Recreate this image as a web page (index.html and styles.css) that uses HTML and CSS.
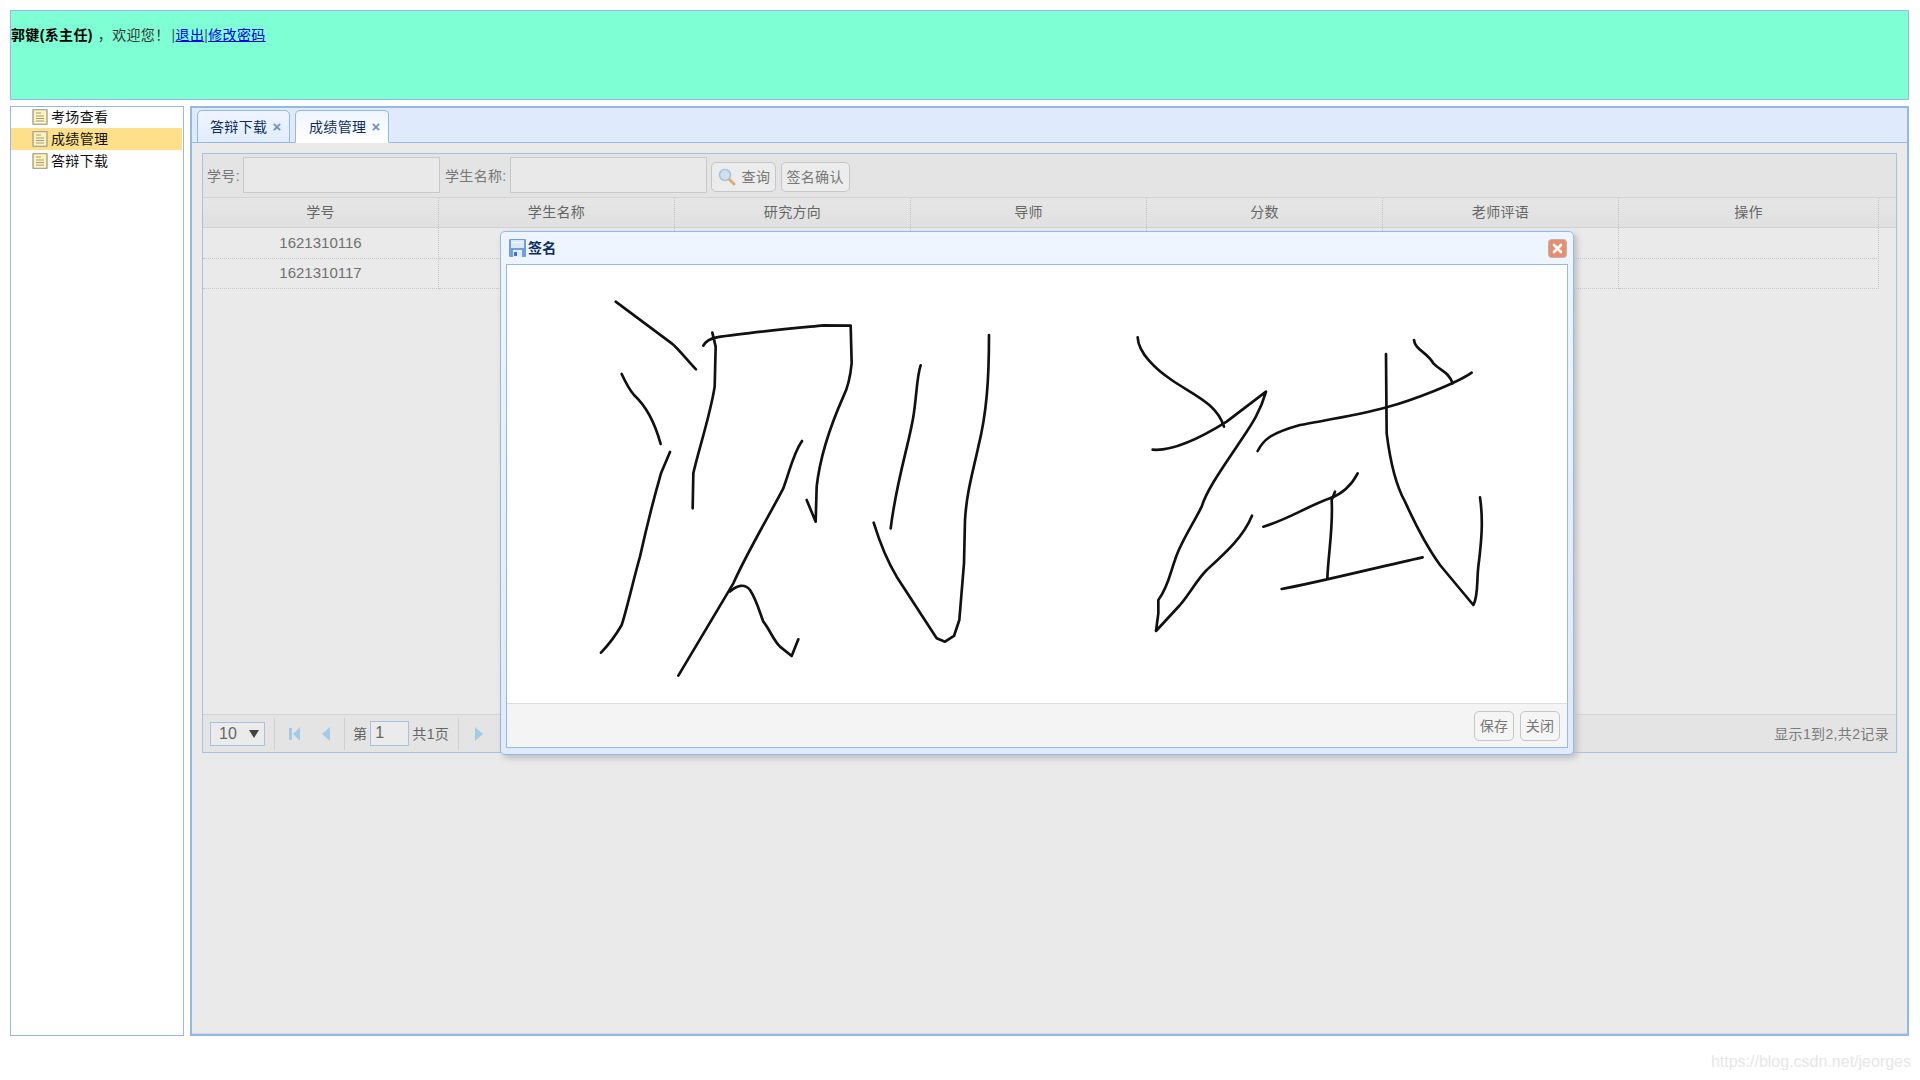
FILE: index.html
```html
<!DOCTYPE html>
<html lang="zh-CN">
<head>
<meta charset="utf-8">
<title>成绩管理</title>
<link rel="stylesheet" href="styles.css">
</head>
<body>
<header class="top">
  <b>郭键(系主任)</b><span class="greet">，欢迎您！</span><span class="pipe">|</span><a href="#">退出</a><span class="pipe">|</span><a href="#">修改密码</a>
</header>
<div class="layout">
  <nav class="tree">
    <div class="node"><svg class="file" viewBox="0 0 16 16"><rect x="1" y="0.500" width="14" height="15" rx="1" fill="#fdf3b4" stroke="#aaa69c" stroke-width="1.500"/><path d="M4 4h5M4 7h8M4 9.500h8M4 12h8" stroke="#a09c90" fill="none"/></svg>考场查看</div>
    <div class="node sel"><svg class="file" viewBox="0 0 16 16"><rect x="1" y="0.500" width="14" height="15" rx="1" fill="#fdf3b4" stroke="#aaa69c" stroke-width="1.500"/><path d="M4 4h5M4 7h8M4 9.500h8M4 12h8" stroke="#a09c90" fill="none"/></svg>成绩管理</div>
    <div class="node"><svg class="file" viewBox="0 0 16 16"><rect x="1" y="0.500" width="14" height="15" rx="1" fill="#fdf3b4" stroke="#aaa69c" stroke-width="1.500"/><path d="M4 4h5M4 7h8M4 9.500h8M4 12h8" stroke="#a09c90" fill="none"/></svg>答辩下载</div>
  </nav>
  <main class="main">
    <div class="tabs">
      <div class="tab">答辩下载<span class="x">×</span></div>
      <div class="tab on">成绩管理<span class="x">×</span></div>
    </div>
    <div class="content">
      <section class="grid">
        <div class="toolbar">
          <label class="lab">学号:</label><span class="inp"></span>
          <label class="lab">学生名称:</label><span class="inp second"></span>
          <span class="btn query"><svg class="mag" viewBox="0 0 18 18"><circle cx="7" cy="7" r="5.500" fill="#cfe0f2" stroke="#a9c0d6" stroke-width="1.500"/><path d="M11.500 11.500l4.500 4.500" stroke="#dcae74" stroke-width="3" stroke-linecap="round"/></svg>查询</span>
          <span class="btn confirm">签名确认</span>
        </div>
        <div class="row head">
          <div>学号</div><div>学生名称</div><div>研究方向</div><div>导师</div><div>分数</div><div>老师评语</div><div>操作</div><div class="tail"></div>
        </div>
        <div class="row data">
          <div class="num">1621310116</div><div></div><div></div><div></div><div></div><div></div><div></div><div class="tail"></div>
        </div>
        <div class="row data">
          <div class="num">1621310117</div><div></div><div></div><div></div><div></div><div></div><div></div><div class="tail"></div>
        </div>
        <div class="grow"></div>
        <div class="pager">
          <span class="size">10<i class="caret"></i></span>
          <span class="sep"></span>
          <svg class="pi first" viewBox="0 0 11 14"><path d="M0 1h3v12H0zM11 0v14L4 7z" fill="#a4cbe6"/></svg>
          <svg class="pi prev" viewBox="0 0 8 14"><path d="M8 0v14L0 7z" fill="#a4cbe6"/></svg>
          <span class="sep tight"></span>
          <span class="pt">第</span><span class="pg">1</span><span class="pt total">共1页</span>
          <span class="sep"></span>
          <svg class="pi next" viewBox="0 0 8 14"><path d="M0 0v14l8-7z" fill="#a4cbe6"/></svg>
          <span class="info">显示1到2,共2记录</span>
        </div>
      </section>
    </div>
  </main>
</div>
<div class="win">
  <div class="win-title">
    <svg class="save" viewBox="0 0 17 18"><rect width="17" height="18" rx="1" fill="#6f9fe2"/><rect x="2" y="1" width="13" height="8" fill="#dbe8f8"/><rect x="2" y="3" width="13" height="1" fill="#f4f8fd"/><rect x="4" y="11" width="9" height="7" fill="#e6ebf2"/><rect x="5" y="13" width="3" height="4" fill="#3f74c4"/></svg>
    <span>签名</span>
    <svg class="close" viewBox="0 0 19 19"><rect x="0.500" y="0.500" width="18" height="18" rx="3" fill="#e58f72" stroke="#c9b0a6"/><path d="M6 6l7 7M13 6l-7 7" stroke="#fff" stroke-width="2.600" stroke-linecap="round"/></svg>
  </div>
  <div class="win-body">
    <svg class="sign" viewBox="507 265 1060 438">
      <g class="ink" transform="translate(560 280) scale(.33333)">
        <path d="M167 65L335 190C350 200 385 245 408 268"/>
        <path d="M185 282Q205 325 222 345C255 375 285 430 302 492"/>
        <path d="M330 516L303 580C280 660 260 740 240 830C220 900 200 990 185 1035C165 1070 145 1095 123 1118"/>
        <path d="M430 197Q440 178 470 172C560 158 700 145 790 136L872 137L875 250C870 300 860 330 850 350C810 440 780 530 770 620L767 725L740 660"/>
        <path d="M457 158L467 200L464 320C450 410 415 510 400 580L398 685"/>
        <path d="M726 483C700 520 690 570 670 625C620 720 560 820 520 910L355 1187"/>
        <path d="M510 935C530 915 555 910 570 930C590 960 600 1000 610 1025C630 1050 640 1080 660 1100L695 1128L715 1078"/>
        <path d="M1082 256C1070 290 1070 350 1060 410C1045 500 1010 600 992 745"/>
        <path d="M1287 165C1287 300 1280 400 1255 500C1235 590 1220 640 1215 720L1212 850L1198 1020L1182 1068L1155 1085L1130 1075L1010 890C980 840 960 790 941 728"/>
      </g>
      <g class="ink" transform="translate(1080 300) scale(.33333)">
        <path d="M173 112C175 160 230 210 275 240C340 285 410 310 432 380"/>
        <path d="M218 449C290 455 400 390 440 365L558 275C540 340 510 380 470 440C430 500 380 570 365 620C335 680 300 730 285 780C270 820 265 860 235 900L235 940L228 993L300 915C330 880 350 840 380 810C440 755 490 710 516 647"/>
        <path d="M533 453C550 420 570 400 660 375C740 360 840 345 920 322C1000 300 1130 250 1175 218"/>
        <path d="M918 162L920 400C930 480 950 560 975 605C1000 660 1040 740 1080 795L1180 915C1195 890 1190 840 1195 800C1205 720 1210 660 1200 592"/>
        <path d="M1002 120C1005 150 1040 155 1060 190C1085 215 1105 215 1118 250"/>
        <path d="M550 680C620 660 680 620 750 595C790 580 815 555 833 520"/>
        <path d="M765 575L755 600C760 680 745 760 742 835"/>
        <path d="M605 867C700 850 900 800 1028 772"/>
      </g>
    </svg>
    <div class="win-foot">
      <span class="btn">保存</span><span class="btn">关闭</span>
    </div>
  </div>
</div>
<div class="mark">https://blog.csdn.net/jeorges</div>
</body>
</html>
```

FILE: styles.css
```css
* { box-sizing: border-box; }
html, body { height: 1080px; overflow: hidden; }
body {
  margin: 0;
  padding: 10px 11px 0 10px;
  background: #fff;
  font: 14px/20px "Liberation Sans", "Noto Sans CJK SC", sans-serif;
  letter-spacing: .35px;
  color: #000;
}
.top {
  height: 90px;
  padding-top: 14px;
  background: #7fffd4;
  border: 1px solid #95b8e7;
  color: #333;
}
.top b { color: #000; }
.greet { margin: 0 2px 0 5px; }
.pipe { color: #555; }
.top a { color: #0000ee; text-decoration: underline; }
.layout { display: flex; gap: 6px; height: 930px; margin-top: 6px; }
.tree {
  width: 174px;
  background: #fff;
  border: 1px solid #95b8e7;
  padding-right: 1px;
  color: #111;
}
.node { display: flex; align-items: center; height: 22px; padding-left: 21px; }
.node:first-child { margin-top: -1px; }
.node.sel { background: #ffe08a; }
.file { width: 16px; height: 16px; margin-right: 3px; }
.main {
  flex: 1;
  display: flex;
  flex-direction: column;
  background: #eaeaea;
  border: 2px solid #95b8e7;
  box-shadow: inset 0 -1px 0 #c7d8f0;
}
.tabs {
  display: flex;
  align-items: flex-end;
  gap: 5px;
  height: 35px;
  padding-left: 5px;
  background: #dfeafd;
  border-bottom: 1px solid #95b8e7;
}
.tab {
  width: 93px;
  height: 33px;
  margin-bottom: -1px;
  padding: 6px 0 0 12px;
  background: linear-gradient(#eff5ff, #e0ecff);
  border: 1px solid #95b8e7;
  border-radius: 5px 5px 0 0;
  color: #0e2d5f;
  white-space: nowrap;
}
.tab.on {
  width: 94px;
  padding-left: 13px;
  background: linear-gradient(#eff5ff, #fff);
  border-bottom-color: #fff;
}
.x { margin-left: 5px; color: #6f8fc0; font-size: 15px; font-weight: bold; }
.content { flex: 1; padding: 10px; }
.grid {
  display: flex;
  flex-direction: column;
  height: 600px;
  border: 1px solid #a6c1e4;
  color: #666;
}
.toolbar {
  display: flex;
  align-items: center;
  height: 44px;
  padding: 0 0 1px 4px;
  background: #e4e4e4;
  border-bottom: 1px solid #d4d4d4;
}
.lab { margin: 1px 3px 0 0; white-space: nowrap; color: #777; }
.inp {
  width: 197px;
  height: 36px;
  margin-right: 5px;
  background: #e9e9e9;
  border: 1px solid #c8c8c8;
}
.inp.second { margin: 0 4px 0 0; }
.btn {
  display: inline-flex;
  align-items: center;
  justify-content: center;
  height: 30px;
  padding: 0 4px;
  background: #ececec;
  border: 1px solid #c6c6c6;
  border-radius: 5px;
  color: #777;
  white-space: nowrap;
}
.toolbar .btn { margin: 4px 5px 0 0; }
.query { width: 65px; justify-content: flex-start; }
.confirm { width: 69px; }
.mag { width: 18px; height: 18px; margin: 0 6px 0 2px; }
.row {
  display: grid;
  grid-template-columns: repeat(6, 236px) 260px 1fr;
  height: 30px;
  flex: none;
  text-align: center;
  line-height: 28px;
}
.row > div { border-right: 1px dotted #c4c4c4; }
.row > .tail { border: 0; }
.head {
  background: linear-gradient(#e6e6e6, #e0e0e0);
  border-bottom: 1px solid #d2d2d2;
}
.data { line-height: 30px; }
.data > div { border-bottom: 1px dotted #c4c4c4; }
.data > .tail { border: 0; }
.num { font-size: 15px; color: #707070; letter-spacing: 0; }
.grow { flex: 1; }
.pager {
  display: flex;
  align-items: center;
  height: 38px;
  padding-left: 7px;
  background: #e4e4e4;
  border-top: 1px solid #d4d4d4;
  color: #666;
}
.size {
  display: flex;
  align-items: center;
  width: 55px;
  height: 24px;
  padding-left: 8px;
  border: 1px solid #a6c1e4;
  font-size: 16px;
  letter-spacing: 0;
  background: #ebebeb;
}
.caret {
  margin-left: 12px;
  border: 5px solid transparent;
  border-top: 8px solid #444;
  border-bottom: 0;
}
.sep { width: 1px; height: 32px; background: #d0d0d0; margin: 0 14px 0 9px; }
.sep.tight { margin-right: 5px; }
.pi { height: 14px; }
.first { width: 11px; margin-right: 22px; }
.prev { width: 8px; margin-right: 5px; }
.next { width: 8px; margin-left: 2px; }
.pt { margin: 0 3px; }
.pt.total { margin-right: 0; }
.pg {
  width: 39px;
  height: 25px;
  padding-left: 4px;
  border: 1px solid #a6c1e4;
  font-size: 16px;
  letter-spacing: 0;
  line-height: 21px;
  background: #ebebeb;
}
.info { margin-left: auto; margin-right: 7px; color: #7a7a7a; }
.win {
  position: absolute;
  left: 500px;
  top: 231px;
  display: flex;
  flex-direction: column;
  width: 1074px;
  height: 524px;
  padding: 0 5px 6px;
  background: linear-gradient(#eff5ff, #dfeafd);
  border: 1px solid #95b8e7;
  border-radius: 5px;
  box-shadow: 3px 3px 6px #bcbcbc;
}
.win-title {
  display: flex;
  align-items: center;
  height: 32px;
  flex: none;
  padding-left: 3px;
  color: #0e2d5f;
  font-weight: bold;
}
.save { width: 17px; height: 18px; margin-right: 2px; }
.close { width: 19px; height: 19px; margin: 0 1px 0 auto; }
.win-body {
  flex: 1;
  display: flex;
  flex-direction: column;
  background: #fff;
  border: 1px solid #95b8e7;
}
.sign { display: block; width: 100%; height: 438px; flex: none; }
.ink path {
  fill: none;
  stroke: #111;
  stroke-width: 8;
  stroke-linecap: round;
  stroke-linejoin: round;
}
.win-foot {
  flex: 1;
  display: flex;
  align-items: center;
  justify-content: flex-end;
  gap: 6px;
  padding-right: 7px;
  background: #f4f4f4;
  border-top: 1px solid #ddd;
}
.win-foot .btn { width: 40px; background: #f5f5f5; }
.mark {
  position: absolute;
  right: 9px;
  bottom: 8px;
  font-size: 16px;
  letter-spacing: 0;
  color: #e6e6e6;
}
```
